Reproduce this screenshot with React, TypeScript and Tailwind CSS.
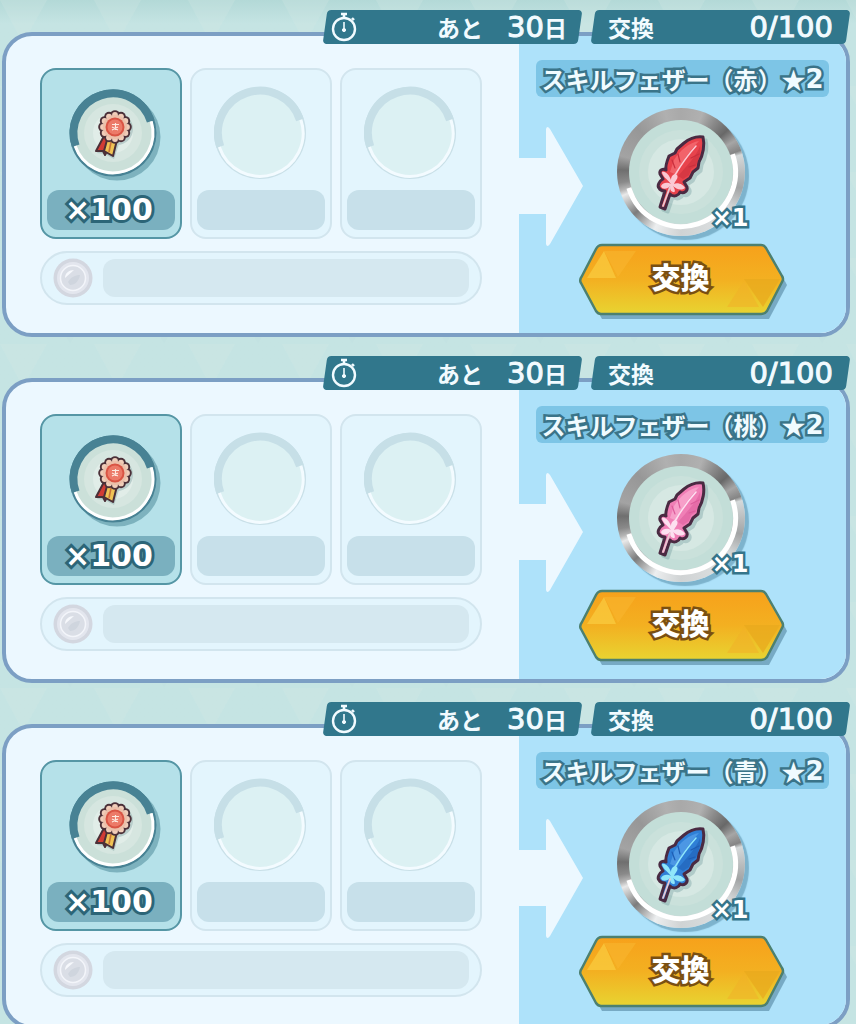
import type { ReactNode } from "react";

type Tone = {
  base: string;
  dark: string;
  petal: string;
  light: string;
};

const offers: { id: string; color: string; tone: Tone }[] = [
  { id: "red", color: "赤", tone: { base: "#e8434c", dark: "#c92f3d", petal: "#fbc9d3", light: "#f2636a" } },
  { id: "pink", color: "桃", tone: { base: "#f07fb6", dark: "#dd5c9c", petal: "#fde0f0", light: "#f79fc9" } },
  { id: "blue", color: "青", tone: { base: "#2f7fd6", dark: "#1f5db3", petal: "#8fe6fa", light: "#4c97e4" } },
];

// svg arc around (cx, cy), angles in degrees, clockwise when to > from
function arc(cx: number, cy: number, r: number, from: number, to: number) {
  const at = (deg: number) => {
    const a = (deg * Math.PI) / 180;
    return `${(cx + r * Math.cos(a)).toFixed(2)} ${(cy + r * Math.sin(a)).toFixed(2)}`;
  };
  const large = Math.abs(to - from) > 180 ? 1 : 0;
  return `M${at(from)}A${r} ${r} 0 ${large} ${to > from ? 1 : 0} ${at(to)}`;
}

function Backdrop() {
  return (
    <svg className="absolute inset-0 -z-10 h-full w-full" aria-hidden="true">
      <defs>
        <pattern id="triangles" width="94" height="86" patternUnits="userSpaceOnUse">
          <path d="M0 0H47L23 43Z" fill="#d3e9e4" opacity="0.25" />
          <path d="M47 43H94L70 86Z" fill="#b9dedb" opacity="0.2" />
        </pattern>
      </defs>
      <rect width="100%" height="100%" fill="url(#triangles)" />
    </svg>
  );
}

function Stopwatch() {
  return (
    <svg viewBox="0 0 26 30" className="h-[30px] w-[26px]" fill="none" stroke="#f2fbff" aria-hidden="true">
      <circle cx="13" cy="17" r="11" strokeWidth="2.4" />
      <path d="M10 2h6M13 2v4" strokeWidth="2.6" />
      <path d="M21 6l2 2" strokeWidth="2.4" />
      <path d="M13 10v6" strokeWidth="1.6" />
      <circle cx="13" cy="18" r="1.6" fill="#f2fbff" />
    </svg>
  );
}

function Tab({ className, children }: { className: string; children: ReactNode }) {
  return (
    <div
      className={`relative z-0 flex h-[34px] items-center justify-between text-[23px] leading-none font-bold whitespace-nowrap text-[#f2fbff] before:absolute before:inset-y-0 before:right-0.5 before:left-0.5 before:-z-10 before:-skew-x-[8deg] before:rounded-[4px] before:bg-[#31778c] ${className}`}
    >
      {children}
    </div>
  );
}

function Digits({ children }: { children: ReactNode }) {
  return (
    <span className="font-['DejaVu_Sans',sans-serif] text-[29px] leading-none font-normal [-webkit-text-stroke:1px_#f2fbff]">
      {children}
    </span>
  );
}

function Medal() {
  const petals = Array.from({ length: 12 }, (_, i) => {
    const a = (i * Math.PI) / 6;
    return { x: 51 + Math.cos(a) * 12, y: 41 + Math.sin(a) * 12 };
  });
  return (
    <g>
      <g transform="translate(2 2)" opacity="0.25" fill="#46757a">
        <circle cx="51" cy="41" r="16" />
        <path d="M38 52l-7 13 8 1 9 5 5-15z" />
      </g>
      <path d="M40 50l-8 15 7 0 2 4 6-13z" fill="#d23b35" stroke="#4b3038" strokeWidth="2" strokeLinejoin="round" />
      <path d="M43 54l-3 11 9 5 4-16z" fill="#f0c355" stroke="#4b3038" strokeWidth="2" strokeLinejoin="round" />
      <path d="M47 56l-2 10" stroke="#c8743a" strokeWidth="1.6" />
      {petals.map((p) => (
        <circle key={`${p.x}-${p.y}`} cx={p.x} cy={p.y} r="4.8" fill="#4b3038" />
      ))}
      {petals.map((p) => (
        <circle key={`${p.x}-${p.y}`} cx={p.x} cy={p.y} r="2.9" fill="#f0cdb9" />
      ))}
      <circle cx="51" cy="41" r="12" fill="#ecc0aa" />
      <circle cx="51" cy="41" r="9.5" fill="#d95444" />
      <circle cx="51" cy="41" r="7.5" fill="#ec7a68" />
      <path d="M48 38.500h7M51.500 37v7M48 44l6-3M48 41l6 3" stroke="#fde9df" strokeWidth="1.2" />
    </g>
  );
}

function MedalRing() {
  return (
    <svg viewBox="0 0 94 94" className="h-[94px] w-[94px] overflow-visible" aria-hidden="true">
      <circle cx="53" cy="51" r="43.5" fill="#4f8c9b" opacity="0.55" />
      <circle cx="49" cy="47" r="43.5" fill="#488294" />
      <circle cx="49" cy="47" r="41" fill="#cbe0d9" />
      <circle cx="49" cy="47" r="29" fill="#d6e6e0" />
      <circle cx="49" cy="47" r="20" fill="#e1ede8" />
      <path d={arc(49, 47, 39.5, 161, 343)} fill="none" stroke="#488294" strokeWidth="8" />
      <path d={arc(49, 47, 40, 161, -17)} fill="none" stroke="#fff" strokeWidth="3" />
      <Medal />
    </svg>
  );
}

function EmptyRing() {
  return (
    <svg viewBox="0 0 94 94" className="h-[94px] w-[94px]" aria-hidden="true">
      <circle cx="46" cy="47" r="46" fill="#c9e0e8" />
      <circle cx="46" cy="47" r="44" fill="#dcf1f3" />
      <path d={arc(46, 47, 42, 161, 342)} fill="none" stroke="#c6dfe7" strokeWidth="8" />
      <path d={arc(46, 47, 43, 161, -18)} fill="none" stroke="#f3fbff" strokeWidth="3" />
    </svg>
  );
}

function Slot({ amount }: { amount?: number }) {
  const filled = amount !== undefined;
  return (
    <li
      className={`flex flex-col items-center gap-2.5 rounded-2xl border-2 px-[5px] pt-4 pb-[7px] ${
        filled ? "border-[#5596a5] bg-[#b5e1e9]" : "border-[#d2e5ee] bg-[#e3f5fd]"
      }`}
    >
      {filled ? <MedalRing /> : <EmptyRing />}
      <div
        className={`flex h-10 w-full items-center justify-center rounded-xl pr-1 ${
          filled ? "bg-[#7ab0bf]" : "bg-[#c7e0ea]"
        }`}
      >
        {filled && (
          <span className="font-['DejaVu_Sans',sans-serif] text-[30px] leading-none font-bold text-white [-webkit-text-stroke:6px_#2c6577] [paint-order:stroke_fill]">
            ×{amount}
          </span>
        )}
      </div>
    </li>
  );
}

function Coin() {
  return (
    <svg viewBox="0 0 40 40" className="h-10 w-10 shrink-0" aria-hidden="true">
      <circle cx="20" cy="20" r="19.500" fill="#d3d7e0" />
      <circle cx="20" cy="20" r="16" fill="#e3e6ee" />
      <circle cx="20" cy="20" r="12.500" fill="#dadee6" stroke="#f3f5fa" strokeWidth="1.500" />
      <path d="M12 20c0-5 4-8 9-8-3 3-6 5-9 8z" fill="#f6f8fc" />
      <path d="M15 24c3-5 7-7 12-7-1 6-5 10-10 10z" fill="#cfd5de" />
    </svg>
  );
}

function Feather({ tone }: { tone: Tone }) {
  const outline =
    "M86 29C79 28 72 31 67 35L60 41 58 45 52 48C50 53 48 58 49 62 46 60 42 62 43 66L46 71C42 73 40 78 42 80 43 82 46 83 48 83L43 99 48 101 53 86C57 90 62 87 63 84 67 86 71 83 70 79L67 74 73 70 76 64 81 60 82 54C86 47 88 37 86 29Z";
  return (
    <g strokeLinejoin="round" strokeLinecap="round">
      <path d={outline} fill="#5c8a8e" stroke="#5c8a8e" strokeWidth="3" opacity="0.3" transform="translate(3 3)" />
      <path d={outline} fill={tone.base} stroke="#4a2a42" strokeWidth="3" />
      <path d="M82 33C73 34 62 43 57 52L53 64 60 67C64 54 72 44 82 33Z" fill={tone.light} />
      <path d="M83 38C80 47 70 58 61 68L66 71 72 67 74 61 79 58C82 51 84 44 83 38Z" fill={tone.dark} opacity="0.55" />
      <path d="M55 52l3 8M61 46l2 8M78 57l-6 2M82 46l-8 4" stroke={tone.dark} strokeWidth="1.200" fill="none" />
      <path d="M58 67C64 57 70 48 79 38" stroke={tone.petal} strokeWidth="1.500" fill="none" />
      <path
        d="M54 76C50 71 45 68 45 64 49 63 52 67 54 72 54 68 57 65 60 67 62 70 58 73 57 76 61 74 67 77 68 80 64 83 59 81 56 78 58 81 59 85 56 84 53 83 53 80 53 78 50 82 44 81 44 78 46 74 51 74 54 76Z"
        fill={tone.petal}
      />
      <path d="M53 79L46 98" stroke="#e8c9d2" strokeWidth="1.800" fill="none" />
    </g>
  );
}

function RewardIcon({ tone }: { tone: Tone }) {
  return (
    <div className="relative mr-1 h-32 w-32 rounded-full bg-[conic-gradient(#a9a9a9_0deg,#b0b0b0_20deg,#8a8a8a_34deg,#686868_48deg,#a6a6a6_60deg,#858585_70deg,#d5d9da_74deg,#a2a4a5_105deg,#dfe2e3_130deg,#d0d3d4_180deg,#eceeef_205deg,#7c7c7c_228deg,#e9e9e9_248deg,#b5b5b5_253deg,#8a8a8a_260deg,#6f6f6f_272deg,#a3a3a3_285deg,#979797_315deg,#b0b0b0_345deg,#a9a9a9_360deg)] shadow-[4px_4px_1px_#7db3cd]">
      <svg viewBox="0 0 128 128" className="h-full w-full" aria-hidden="true">
        <circle cx="64" cy="64" r="52" fill="#c3ded8" />
        <circle cx="64" cy="64" r="42" fill="#cae1db" />
        <circle cx="64" cy="64" r="33" fill="#d6e8e3" />
        <path d={arc(64, 64, 54.5, 163, -19)} fill="none" stroke="#fff" strokeWidth="5" />
        <Feather tone={tone} />
      </svg>
      <span className="absolute -right-1 bottom-1.5 font-['DejaVu_Sans',sans-serif] text-2xl leading-none font-bold text-white [-webkit-text-stroke:5px_#35748a] [paint-order:stroke_fill]">
        ×1
      </span>
    </div>
  );
}

function ExchangeButton({ id }: { id: string }) {
  const fill = `btn-${id}`;
  return (
    <button type="button" className="relative z-0 mr-1 h-[72px] w-[206px] cursor-pointer pb-1 text-center">
      <svg viewBox="0 0 206 72" className="absolute inset-0 -z-10 h-full w-full overflow-visible" aria-hidden="true">
        <defs>
          <linearGradient id={fill} x1="0" y1="0" x2="0" y2="1">
            <stop offset="0" stopColor="#f7a11b" />
            <stop offset="0.500" stopColor="#f3b021" />
            <stop offset="1" stopColor="#e8d431" />
          </linearGradient>
        </defs>
        <path d="M1 36L20 1H186L205 36 187 70H20Z" fill="#5f93ad" opacity="0.7" transform="translate(4 5)" />
        <path
          d="M4 32L18 5Q20 1 24 1H183Q186 1 188 4L204 32Q206 35 204 38L189 67Q187 70 183 70H23Q20 70 18 67L3 39Q1 36 4 32Z"
          fill={`url(#${fill})`}
          stroke="#4c8070"
          strokeWidth="2.500"
          strokeLinejoin="round"
        />
        <path d="M26 7L38 34H9Z" fill="#fbd044" opacity="0.65" />
        <path d="M26 7H58L40 33Z" fill="#f9b52f" opacity="0.6" />
        <path d="M166 35H202L185 63Z" fill="#e8a91e" opacity="0.75" />
        <path d="M166 37L149 63H181Z" fill="#f0b028" opacity="0.55" />
      </svg>
      <span className="text-[29px] leading-none font-black text-white [-webkit-text-stroke:5px_#7a4f12] [paint-order:stroke_fill]">
        交換
      </span>
    </button>
  );
}

function OfferCard({ id, color, tone }: { id: string; color: string; tone: Tone }) {
  return (
    <article className="mr-1.5 ml-0.5">
      <header className="relative z-10 -mb-3 ml-auto grid w-[527px] grid-cols-2 gap-[9px]">
        <Tab className="pr-[15px] pl-2">
          <Stopwatch />
          <p className="flex items-center gap-6">
            <span>あと</span>
            <span className="flex items-center">
              <Digits>30</Digits>日
            </span>
          </p>
        </Tab>
        <Tab className="px-[17px]">
          <span>交換</span>
          <Digits>0/100</Digits>
        </Tab>
      </header>

      <div className="flex overflow-hidden rounded-[30px] border-4 border-[#7c9fc4] bg-[#ecf8ff]">
        {/* cost */}
        <div className="flex-1 pt-8 pr-[37px] pb-7 pl-[34px]">
          <ul className="grid grid-cols-3 gap-2">
            <Slot amount={100} />
            <Slot />
            <Slot />
          </ul>
          <div className="mt-3 flex h-[54px] items-center gap-2.5 rounded-full border-2 border-[#d2e5ee] bg-[#e3f5fd] px-[11px]">
            <Coin />
            <div className="h-[38px] flex-1 rounded-xl bg-[#d5e8f0]" />
          </div>
        </div>

        {/* reward */}
        <div className="relative flex w-[327px] shrink-0 flex-col items-center bg-[#aee2fa] pt-6">
          <svg viewBox="0 0 64 122" className="absolute top-[90px] left-0 h-[122px] w-16" aria-hidden="true">
            <path d="M0 32H27V3Q28-1 31 3L64 60 31 118Q28 122 27 118V88H0Z" fill="#ecf8ff" />
          </svg>
          <h2 className="flex h-[37px] items-center rounded-md bg-[#7dc5e6] px-[5px] text-[24px] leading-none font-bold whitespace-nowrap text-[#f0fbff] [-webkit-text-stroke:5px_#3a7489] [paint-order:stroke_fill]">
            スキルフェザー（{color}）★
            <span className="font-['DejaVu_Sans',sans-serif] text-[26px]">2</span>
          </h2>
          <div className="mt-[11px] mb-2">
            <RewardIcon tone={tone} />
          </div>
          <ExchangeButton id={id} />
        </div>
      </div>
    </article>
  );
}

export default function App() {
  return (
    <main
      lang="ja"
      className="relative z-0 flex h-screen flex-col gap-[19px] overflow-hidden bg-[#c5e4e3] bg-linear-to-b from-[#b3d9d7] to-[#c5e4e3] to-[24px] pt-2.5 font-['Noto_Sans_CJK_JP',sans-serif]"
    >
      <Backdrop />
      {offers.map((o) => (
        <OfferCard key={o.id} {...o} />
      ))}
    </main>
  );
}
